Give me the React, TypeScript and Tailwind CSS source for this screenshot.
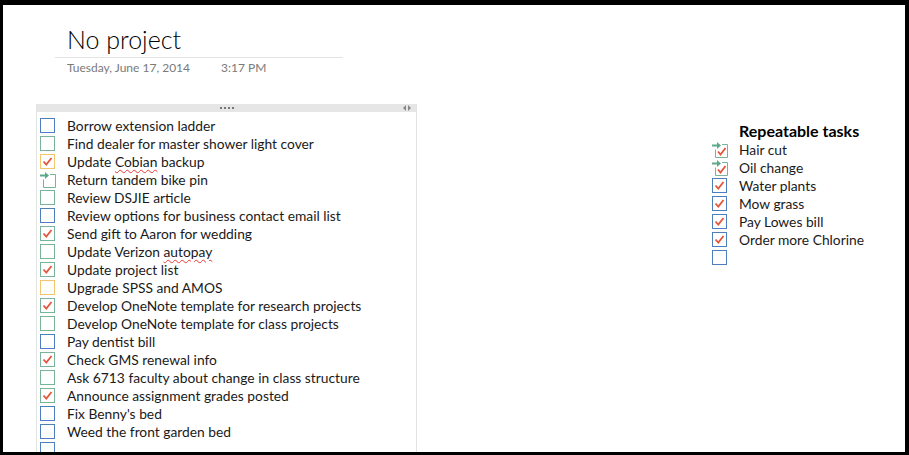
import React from 'react'

type BoxColor = 'blue' | 'green' | 'orange'

const stroke: Record<BoxColor, string> = {
  blue: '#4d7fbe',
  green: '#79b39a',
  orange: '#f5c46e',
}

const Checkbox: React.FC<{ color: BoxColor; checked?: boolean; arrow?: boolean }> = ({ color, checked, arrow }) => {
  const c = stroke[color]
  return (
    <svg width="16" height="16" viewBox="0 0 16 16" className="shrink-0 overflow-visible">
      {arrow ? (
        <>
          <path d="M3.5 7.5V15.5H15.5V2.5H10" fill="none" stroke={c} strokeWidth="1" />
          <path d="M0 3.5H6.5" stroke="#5fa88a" strokeWidth="2" />
          <path d="M5 0L9 3.5L5 7Z" fill="#5fa88a" />
          {checked && <polyline points="6,9.5 8.5,12.5 13.5,6" fill="none" stroke="#e4553b" strokeWidth="1.8" />}
        </>
      ) : (
        <>
          <rect x="0.5" y="0.5" width="14" height="14" fill="none" stroke={c} strokeWidth="1" />
          {checked && <polyline points="3.5,7.5 6.3,10.5 11.5,4" fill="none" stroke="#e4553b" strokeWidth="1.8" />}
        </>
      )}
    </svg>
  )
}

type Task = { text: React.ReactNode; color: BoxColor; checked?: boolean; arrow?: boolean }

const Squiggle: React.FC<{ children: React.ReactNode }> = ({ children }) => (
  <span className="underline decoration-wavy decoration-[#e53935] decoration-1 underline-offset-2">{children}</span>
)

const tasks: Task[] = [
  { text: 'Borrow extension ladder', color: 'blue' },
  { text: 'Find dealer for master shower light cover', color: 'green' },
  { text: <>Update <Squiggle>Cobian</Squiggle> backup</>, color: 'orange', checked: true },
  { text: 'Return tandem bike pin', color: 'green', arrow: true },
  { text: 'Review DSJIE article', color: 'green' },
  { text: 'Review options for business contact email list', color: 'blue' },
  { text: 'Send gift to Aaron for wedding', color: 'green', checked: true },
  { text: <>Update Verizon <Squiggle>autopay</Squiggle></>, color: 'green' },
  { text: 'Update project list', color: 'green', checked: true },
  { text: 'Upgrade SPSS and AMOS', color: 'orange' },
  { text: 'Develop OneNote template for research projects', color: 'green', checked: true },
  { text: 'Develop OneNote template for class projects', color: 'green' },
  { text: 'Pay dentist bill', color: 'blue' },
  { text: 'Check GMS renewal info', color: 'green', checked: true },
  { text: 'Ask 6713 faculty about change in class structure', color: 'green' },
  { text: 'Announce assignment grades posted', color: 'green', checked: true },
  { text: "Fix Benny's bed", color: 'blue' },
  { text: 'Weed the front garden bed', color: 'blue' },
  { text: '', color: 'blue' },
]

const repeatable: Task[] = [
  { text: 'Hair cut', color: 'green', checked: true, arrow: true },
  { text: 'Oil change', color: 'green', checked: true, arrow: true },
  { text: 'Water plants', color: 'blue', checked: true },
  { text: 'Mow grass', color: 'blue', checked: true },
  { text: 'Pay Lowes bill', color: 'blue', checked: true },
  { text: 'Order more Chlorine', color: 'blue', checked: true },
  { text: '', color: 'blue' },
]

const Row: React.FC<{ task: Task }> = ({ task }) => (
  <div className="flex items-center h-[18px]">
    <Checkbox color={task.color} checked={task.checked} arrow={task.arrow} />
    <span className="ml-[11px] whitespace-nowrap">{task.text}</span>
  </div>
)

export default function App() {
  return (
    <div className="w-[909px] h-[455px] bg-black pt-[5px] pl-[3px] pr-[4px] pb-[3px] overflow-hidden">
      <div className="h-full bg-white overflow-hidden text-[#1a1a1a]" style={{ fontFamily: 'Lato, "Open Sans", sans-serif' }}>
        {/* page title */}
        <div className="ml-[52px] w-[288px] pt-[18px]">
          <div className="pl-[12px] text-[25px] leading-[32px] font-light text-black">No project</div>
          <div className="h-px bg-[#e3e3e3] mt-[2px]" />
          <div className="pl-[12px] flex text-[12px] leading-[20px] text-[#7a7a7a]">
            <span className="w-[154px]">Tuesday, June 17, 2014</span>
            <span>3:17 PM</span>
          </div>
        </div>

        <div className="flex mt-[26px]">
          {/* outline container */}
          <div className="ml-[33px] w-[381px] h-[360px] border-x border-[#e3e3e3]">
            <div className="h-[8px] bg-[#e6e6e6] relative">
              <div className="absolute left-[183px] top-[3px] flex gap-[2px]">
                <span className="w-[2px] h-[2px] bg-[#777]" />
                <span className="w-[2px] h-[2px] bg-[#777]" />
                <span className="w-[2px] h-[2px] bg-[#777]" />
                <span className="w-[2px] h-[2px] bg-[#777]" />
              </div>
              <svg className="absolute right-[5px] top-[1px]" width="8" height="6" viewBox="0 0 8 6">
                <path d="M3 0L0 3L3 6Z" fill="#888" />
                <path d="M5 0L8 3L5 6Z" fill="#888" />
              </svg>
            </div>
            <div className="pl-[3px] pt-[5px] text-[13.8px]">
              {tasks.map((t, i) => (
                <Row key={i} task={t} />
              ))}
            </div>
          </div>

          {/* repeatable tasks */}
          <div className="ml-[295px] pt-[16px] text-[13.8px]">
            <div className="pl-[27px] text-[16px] leading-[21px] font-bold text-black">Repeatable tasks</div>
            {repeatable.map((t, i) => (
              <Row key={i} task={t} />
            ))}
          </div>
        </div>
      </div>
    </div>
  )
}
